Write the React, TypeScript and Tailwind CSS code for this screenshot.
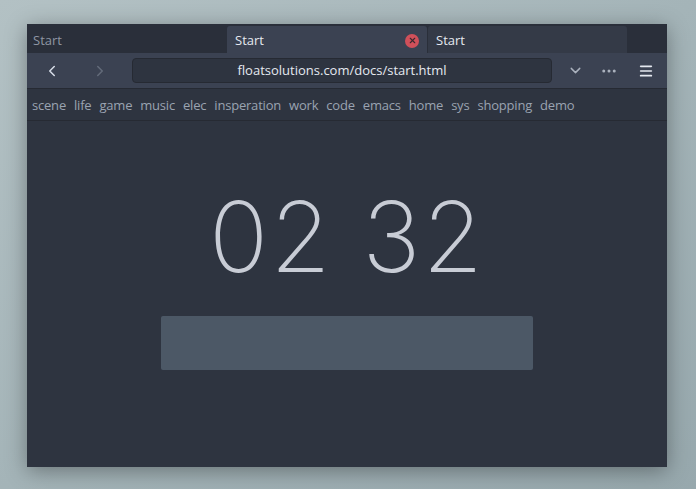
import React from "react";
import { ChevronLeft, ChevronRight, ChevronDown, MoreHorizontal, Menu, X } from "lucide-react";

const links = ["scene", "life", "game", "music", "elec", "insperation", "work", "code", "emacs", "home", "sys", "shopping", "demo"];

export default function App() {
  return (
    <div
      className="w-[696px] h-[489px] pt-[24px] pl-[27px] bg-gradient-to-br from-[#b3c1c4] via-[#a4b4b8] to-[#97a8ad] overflow-hidden"
      style={{ fontFamily: '"Open Sans", "Noto Sans", sans-serif' }}
    >
      <div className="w-[640px] h-[443px] bg-[#2e3440] flex flex-col shadow-[0_4px_20px_rgba(0,0,0,0.35)]">
        <div className="h-[29px] flex bg-[#2a2f3a] text-[13px]">
          <div className="w-[200px] flex items-center px-[6px] pt-[4px] text-[#8f96a3]">Start</div>
          <div className="w-[200px] flex items-center justify-between px-[8px] pt-[2px] bg-[#3b4252] text-[#e5e9f0] rounded-t-[3px] mt-[2px]">
            <span>Start</span>
            <span className="w-[14px] h-[14px] rounded-full bg-[#d0505a] flex items-center justify-center">
              <X className="w-[9px] h-[9px] text-[#3b2a30]" strokeWidth={3} />
            </span>
          </div>
          <div className="w-[200px] flex items-center px-[8px] pt-[2px] bg-[#343a47] text-[#e5e9f0] rounded-t-[3px] mt-[2px] border-l border-[#2a2f3a]">
            Start
          </div>
        </div>
        <div className="h-[36px] flex items-center bg-[#3b4252] border-b border-[#262a33]">
          <div className="w-[105px] flex items-center pl-[16px] gap-[30px]">
            <ChevronLeft className="w-[18px] h-[18px] text-[#d8dee9]" />
            <ChevronRight className="w-[18px] h-[18px] text-[#636b7a]" />
          </div>
          <div className="w-[420px] h-[25px] rounded-[4px] bg-[#2e3440] border border-[#262a33] flex items-center justify-center text-[13px] text-[#e5e9f0]">
            floatsolutions.com/docs/start.html
          </div>
          <div className="flex items-center gap-[16px] ml-[15px]">
            <ChevronDown className="w-[17px] h-[17px] text-[#aab1bd]" />
            <MoreHorizontal className="w-[18px] h-[18px] text-[#aab1bd]" />
            <Menu className="w-[16px] h-[16px] text-[#e5e9f0] ml-[4px]" strokeWidth={2.5} />
          </div>
        </div>
        <div className="h-[32px] flex items-center gap-[8px] px-[5px] pt-[3px] text-[13px] tracking-[-0.2px] text-[#9aa3b1] border-b border-[#262a33]">
          {links.map((l) => (
            <span key={l}>{l}</span>
          ))}
        </div>
        <div className="flex flex-col items-center">
          <div
            className="mt-[57px] text-[98px] leading-[118px] font-extralight text-[#c8ccd5] tracking-[2px]"
            style={{ fontFamily: "Inter, sans-serif" }}
          >
            02 32
          </div>
          <div className="mt-[20px] w-[372px] h-[54px] rounded-[2px] bg-[#4c5866]" />
        </div>
      </div>
    </div>
  );
}
